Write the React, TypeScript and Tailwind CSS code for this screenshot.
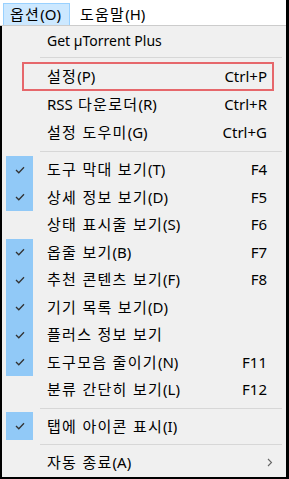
import React from "react";

const Check = () => (
  <svg width="10" height="8" viewBox="0 0 10 8" fill="none">
    <polyline points="1,4 3.8,6.8 9,1.2" stroke="#333" strokeWidth="1.3" fill="none" />
  </svg>
);

function K({ text }: { text: string }) {
  const parts = text.split(/([\uAC00-\uD7A3 ]+)/).filter((p) => p.length > 0);
  return (
    <>
      {parts.map((p, i) =>
        /[\uAC00-\uD7A3]/.test(p) ? (
          <span key={i} className="tracking-[1.3px]">
            {p}
          </span>
        ) : (
          <span key={i}>{p}</span>
        )
      )}
    </>
  );
}

type Row = { label: string; sc?: string; checked?: boolean };

const checkRows: Row[] = [
  { label: "도구 막대 보기(T)", sc: "F4", checked: true },
  { label: "상세 정보 보기(D)", sc: "F5", checked: true },
  { label: "상태 표시줄 보기(S)", sc: "F6" },
  { label: "옵줄 보기(B)", sc: "F7", checked: true },
  { label: "추천 콘텐츠 보기(F)", sc: "F8", checked: true },
  { label: "기기 목록 보기(D)", checked: true },
  { label: "플러스 정보 보기", checked: true },
  { label: "도구모음 줄이기(N)", sc: "F11", checked: true },
  { label: "분류 간단히 보기(L)", sc: "F12" },
];

function Item({
  label,
  sc,
  checked,
  h,
  arrow,
  latin,
}: Row & { h: string; arrow?: boolean; latin?: boolean }) {
  return (
    <div className={`relative flex items-center ${h}`}>
      <div className="w-[45px] h-full flex items-stretch">
        {checked ? (
          <div className="ml-[4px] w-[27px] bg-[#91c9f7] flex items-center justify-center">
            <Check />
          </div>
        ) : null}
      </div>
      <div className={`flex-1 leading-none whitespace-nowrap ${latin ? "text-[14px]" : ""}`}>
        <K text={label} />
      </div>
      {sc ? <div className="pr-[19px] leading-none">{sc}</div> : null}
      {arrow ? (
        <div className="pr-[13px]">
          <svg width="6" height="9" viewBox="0 0 6 9" fill="none">
            <polyline points="1,1 4.5,4.5 1,8" stroke="#666" strokeWidth="1.1" fill="none" />
          </svg>
        </div>
      ) : null}
    </div>
  );
}

const Sep = ({ h, top }: { h: string; top: string }) => (
  <div className={`${h} pl-[38px] pr-[4px]`}>
    <div className={`${top} h-px bg-[#d7d7d7]`} />
  </div>
);

export default function App() {
  return (
    <div
      className="w-[289px] h-[479px] bg-black overflow-hidden text-[15px] text-black"
      style={{ fontFamily: '"Noto Sans", "Noto Sans CJK KR", sans-serif' }}
    >
      <div className="w-[286px] h-[477px] flex flex-col">
        <div className="h-[25px] bg-white flex items-end pl-[3px]">
          <div className="h-[22px] pl-[6px] pr-[8px] bg-[#cce8ff] border border-[#99d1ff] border-b-0 flex items-center leading-none">
            <K text="옵션(O)" />
          </div>
          <div className="h-[22px] px-[10px] flex items-center leading-none">
            <K text="도움말(H)" />
          </div>
        </div>
        <div className="h-px bg-[#cccccc]" />
        <div className="flex-1 ml-[2px] bg-[#f0f0f0] flex flex-col">
          <div className="h-[2px]" />
          <Item label="Get µTorrent Plus" h="h-[26px]" latin />
          <Sep h="h-[8px]" top="mt-[3px]" />
          <div className="relative">
            <Item label="설정(P)" sc="Ctrl+P" h="h-[28px]" />
            <div className="absolute left-[20px] top-0 w-[252px] h-[29px] border-2 border-[#e6676b]" />
          </div>
          <Item label="RSS 다운로더(R)" sc="Ctrl+R" h="h-[28px]" />
          <Item label="설정 도우미(G)" sc="Ctrl+G" h="h-[28px]" />
          <Sep h="h-[10px]" top="mt-[5px]" />
          {checkRows.map((r, i) => (
            <Item key={i} {...r} h="h-[27.5px]" />
          ))}
          <Sep h="h-[8.5px]" top="mt-[4px]" />
          <Item label="탭에 아이콘 표시(I)" checked h="h-[28px]" />
          <Sep h="h-[9px]" top="mt-[4px]" />
          <Item label="자동 종료(A)" h="h-[27px]" arrow />
        </div>
      </div>
    </div>
  );
}
